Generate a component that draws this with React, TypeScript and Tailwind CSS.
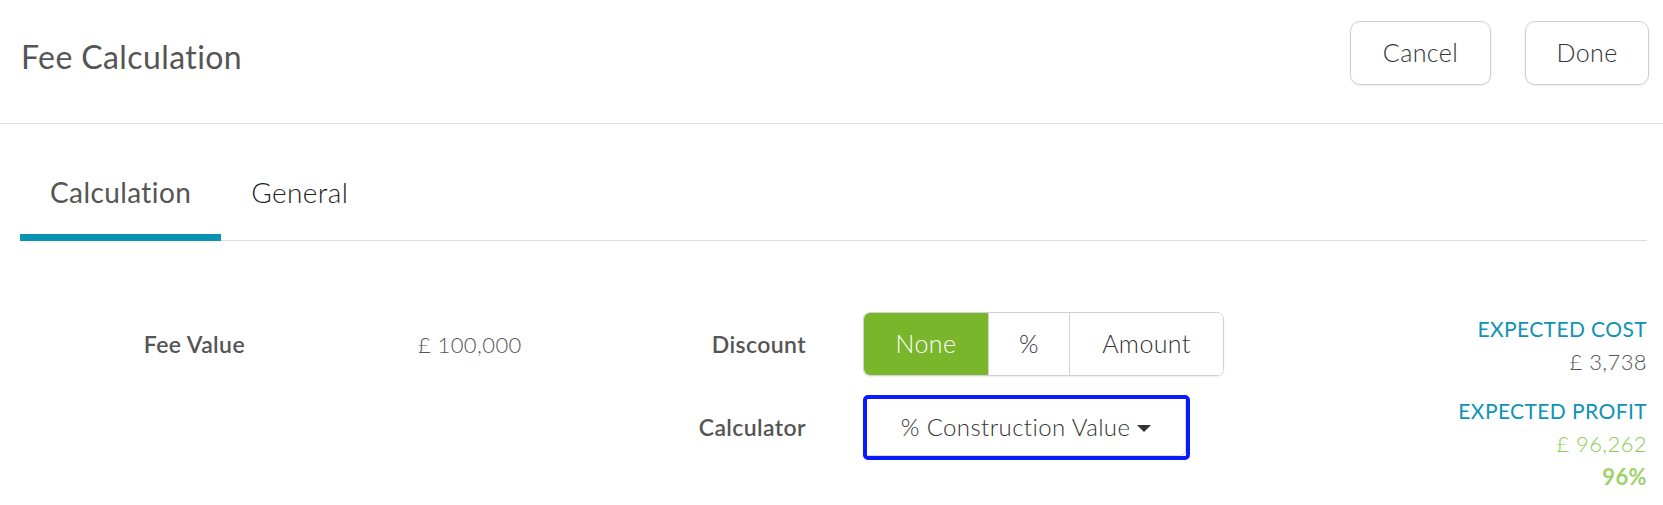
import React, { useState } from "react";

const tabs = ["Calculation", "General"];
const discounts = [
  { label: "None", width: "w-[124px]" },
  { label: "%", width: "w-[81px]" },
  { label: "Amount", width: "w-[154px]" },
];

export default function App() {
  const [activeTab, setActiveTab] = useState("Calculation");
  const [discount, setDiscount] = useState("None");

  return (
    <div className="min-h-screen bg-white font-['Lato',sans-serif] tracking-[0.025em] text-[#555]">
      {/* Header */}
      <div className="flex items-start justify-between h-[124px] pt-[21px] pl-[21px] pr-[14px] border-b border-[#e3e3e3]">
        <h1 className="mt-[17px] text-[32px] leading-[38px] text-[#555]">Fee Calculation</h1>
        <div className="flex gap-[34px]">
          <button className="h-16 w-[141px] rounded-[10px] border border-[#cfcfcf] shadow-[0_1px_2px_rgba(0,0,0,0.08)] text-[25px] font-light text-[#333]">
            Cancel
          </button>
          <button className="h-16 w-[124px] rounded-[10px] border border-[#cfcfcf] shadow-[0_1px_2px_rgba(0,0,0,0.08)] text-[25px] font-light text-[#333]">
            Done
          </button>
        </div>
      </div>

      {/* Tabs */}
      <div className="ml-5 mr-4 mt-[51px] flex border-b border-[#dcdcdc]">
        {tabs.map((tab) => (
          <button
            key={tab}
            onClick={() => setActiveTab(tab)}
            className={`-mb-px px-[30px] pb-[25px] text-[28px] leading-[34px] border-b-[7px] ${
              activeTab === tab
                ? "border-[#0a92b4] text-[#555]"
                : "border-transparent font-light text-[#222]"
            }`}
          >
            {tab}
          </button>
        ))}
      </div>

      {/* Calculation body */}
      <div className="flex items-start px-5 pr-4 pt-[71px]">
        <div className="flex w-[660px] h-16 items-center text-[23px]">
          <span className="w-[225px] text-right font-semibold">Fee Value</span>
          <span className="ml-[173px] text-[22px] font-light">£ 100,000</span>
        </div>

        <div className="grid grid-cols-[126px_auto] gap-x-[57px] gap-y-[19px] items-center text-[23px]">
          <span className="text-right font-semibold">Discount</span>
          <div className="flex h-16 w-fit overflow-hidden rounded-[7px] border border-[#d2d2d2] shadow-[0_1px_2px_rgba(0,0,0,0.08)]">
            {discounts.map((d, i) => (
              <button
                key={d.label}
                onClick={() => setDiscount(d.label)}
                className={`${d.width} text-[25px] font-light ${i > 0 ? "border-l border-[#d2d2d2]" : ""} ${
                  discount === d.label ? "bg-[#7ab62c] text-white" : "bg-white text-[#333]"
                }`}
              >
                {d.label}
              </button>
            ))}
          </div>

          <span className="text-right font-semibold">Calculator</span>
          <div className="h-[65px] w-[327px] rounded-[5px] border-4 border-[#0a1aff]">
            <button className="flex h-full w-full items-center justify-center gap-[7px] rounded-br-[6px] border-r border-b border-[#d6d6d6] text-[24px] font-light text-[#333]">
              % Construction Value
              <span className="mt-[3px] border-x-[7px] border-t-[7px] border-x-transparent border-t-[#333]" />
            </button>
          </div>
        </div>

        <div className="ml-auto text-right leading-[33px]">
          <div className="text-[21px] text-[#0f93b3]">EXPECTED COST</div>
          <div className="text-[22px] font-light text-[#555]">£ 3,738</div>
          <div className="mt-4 text-[21px] text-[#0f93b3]">EXPECTED PROFIT</div>
          <div className="text-[22px] font-light text-[#8fcb57]">£ 96,262</div>
          <div className="text-[22px] font-bold text-[#9cd16b]">96%</div>
        </div>
      </div>
    </div>
  );
}
